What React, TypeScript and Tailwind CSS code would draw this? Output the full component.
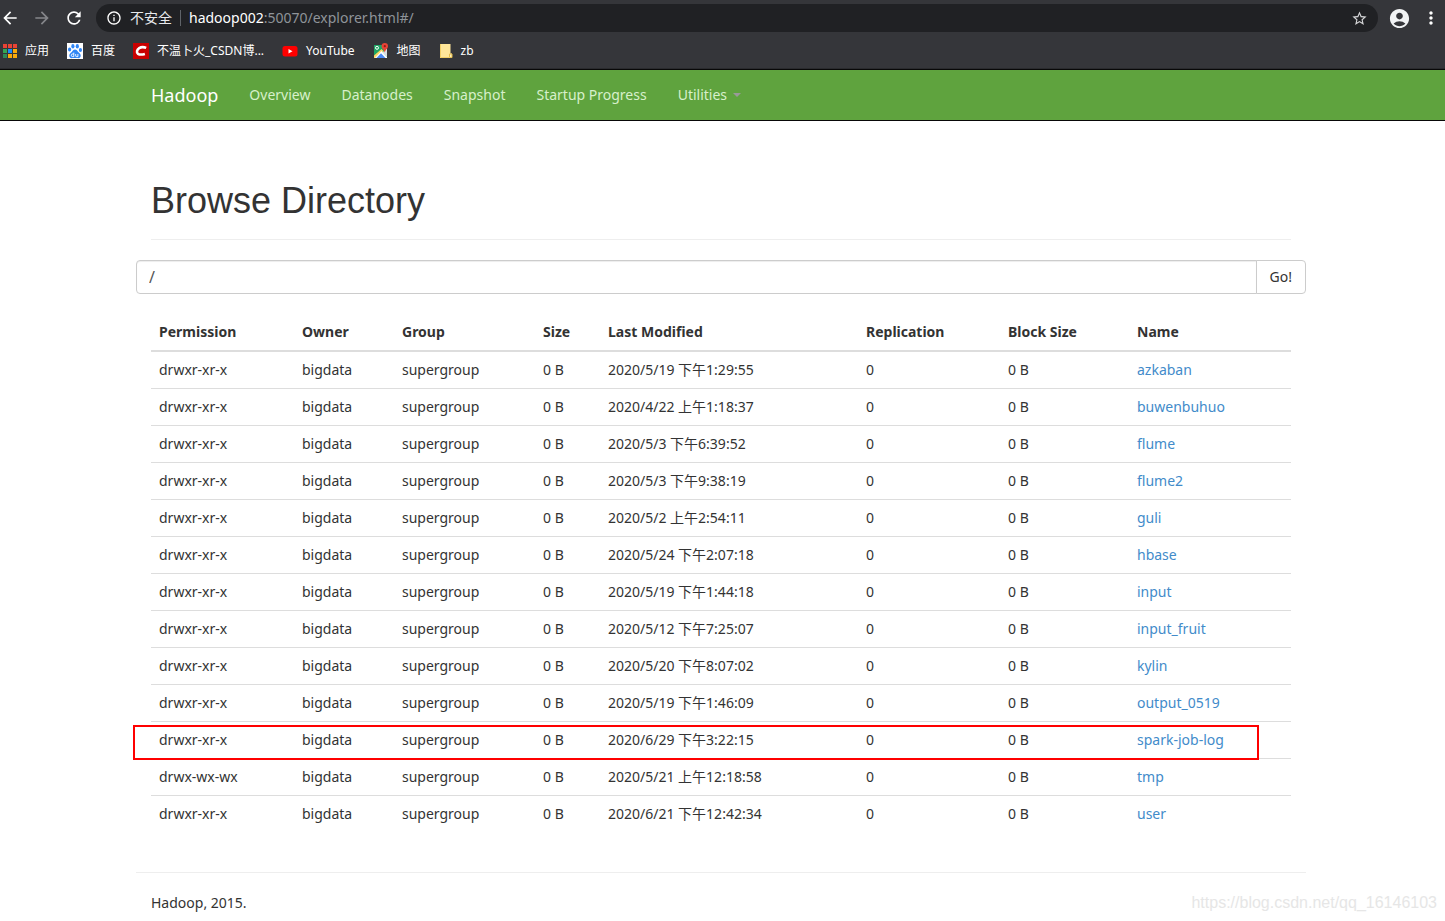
import type { ReactNode } from "react";
import { MdAccountCircle, MdArrowBack, MdArrowForward, MdInfoOutline, MdMoreVert, MdRefresh, MdStarBorder } from "react-icons/md";

const AppsIcon = () => (
  <svg width="14" height="14" viewBox="0 0 14 14" aria-hidden="true" shapeRendering="crispEdges">
    <path fill="#ea4335" d="M0 0h4v4H0zM5 0h4v4H5zM10 0h4v4h-4z" />
    <path fill="#34a853" d="M0 5h4v4H0z" />
    <path fill="#1a8cff" d="M5 5h4v4H5z" />
    <path fill="#fbab0b" d="M10 5h4v4h-4zM5 10h4v4H5zM10 10h4v4h-4z" />
    <path fill="#2e8b57" d="M0 10h4v4H0z" />
  </svg>
);

const BaiduIcon = () => (
  <svg width="16" height="16" viewBox="0 0 16 16" aria-hidden="true">
    <path fill="#fff" d="M0 0h16v16H0z" />
    <g fill="#2f86f6">
      <ellipse cx="5.9" cy="3.2" rx="1.6" ry="2.2" />
      <ellipse cx="10.3" cy="3.3" rx="1.6" ry="2.2" />
      <ellipse cx="2.6" cy="6.6" rx="1.6" ry="2" />
      <ellipse cx="13.4" cy="7" rx="1.6" ry="2" />
      <path d="M8 6.6c-1.700 0-2.200 1.400-3.200 2.400-1.200 1-2.800 2-2.500 4 .3 1.800 1.700 2.300 3.200 2.100 1.700-.3 3.300-.3 5 0 1.500.2 2.900-.3 3.200-2.100.3-2-1.300-3-2.500-4C10.200 8 9.700 6.600 8 6.600z" />
    </g>
    <path d="M6.800 9.600v4H5.600a1.300 1.300 0 0 1 0-2.600h1.200M8.700 11v1.900q0 .7.700.7h1.500V11" fill="none" stroke="#fff" strokeWidth=".9" />
  </svg>
);

const CsdnIcon = () => (
  <svg width="16" height="16" viewBox="0 0 16 16" aria-hidden="true">
    <path fill="#c90000" d="M0 0h16v16H0z" />
    <path d="M13.200 4.900c-2-.8-5-1-7 .2-2.400 1.500-3 4.500-1.200 5.700 1.700 1 4.800.7 6.900.1" fill="none" stroke="#fff" strokeWidth="2.600" />
  </svg>
);

const YouTubeIcon = () => (
  <svg width="16" height="16" viewBox="0 0 16 16" aria-hidden="true">
    <rect x="0.500" y="3" width="15" height="10.500" rx="2.500" fill="#f00" />
    <path fill="#fff" d="M6.500 6v4.500l4-2.250z" />
  </svg>
);

const MapsIcon = () => (
  <svg width="16" height="16" viewBox="0 0 16 16" aria-hidden="true">
    <path fill="#1fa463" d="M1 2h13v13H1z" />
    <path fill="#d8dde3" d="M9.500 9.500 14 5v9z" />
    <path fill="#fdd663" d="M1 12.500 8.500 6l2 2L3.500 15H1z" />
    <path fill="#fff" d="M2 15 8.500 8l5.500 6v1z" />
    <path fill="#4a89f3" d="M3.500 15 8 10.200l4.500 4.800z" />
    <circle cx="4" cy="4.800" r="1.500" fill="none" stroke="#fff" />
    <path fill="#e94335" d="M11.800 0a3.200 3.200 0 0 0-3.200 3.200c0 2.300 2.500 3 3.200 6.300.7-3.300 3.200-4 3.200-6.300A3.200 3.200 0 0 0 11.800 0z" />
    <circle cx="11.800" cy="3.200" r="1.100" fill="#8c1d18" />
  </svg>
);

const FolderIcon = () => (
  <svg width="14" height="14" viewBox="0 0 14 14" aria-hidden="true">
    <path fill="#ffe69a" d="M1 0h10.500v9.500H13V14H1z" />
    <path d="M10.500 13.500V10H13v3.500z" fill="#fff0b8" stroke="#e3bb4c" />
    <path d="M1.500 0v13.500H11" fill="none" stroke="#f2cf66" />
  </svg>
);

const bookmarks: { label: string; icon: ReactNode }[] = [
  { label: "应用", icon: <AppsIcon /> },
  { label: "百度", icon: <BaiduIcon /> },
  { label: "不温卜火_CSDN博...", icon: <CsdnIcon /> },
  { label: "YouTube", icon: <YouTubeIcon /> },
  { label: "地图", icon: <MapsIcon /> },
  { label: "zb", icon: <FolderIcon /> },
];

const navItems = ["Overview", "Datanodes", "Snapshot", "Startup Progress"];

const columns = [
  { title: "Permission", width: "w-[143px]" },
  { title: "Owner", width: "w-[100px]" },
  { title: "Group", width: "w-[141px]" },
  { title: "Size", width: "w-[65px]" },
  { title: "Last Modified", width: "w-[258px]" },
  { title: "Replication", width: "w-[142px]" },
  { title: "Block Size", width: "w-[129px]" },
  { title: "Name", width: "w-[162px]" },
];

const files = [
  { name: "azkaban", modified: "2020/5/19 下午1:29:55" },
  { name: "buwenbuhuo", modified: "2020/4/22 上午1:18:37" },
  { name: "flume", modified: "2020/5/3 下午6:39:52" },
  { name: "flume2", modified: "2020/5/3 下午9:38:19" },
  { name: "guli", modified: "2020/5/2 上午2:54:11" },
  { name: "hbase", modified: "2020/5/24 下午2:07:18" },
  { name: "input", modified: "2020/5/19 下午1:44:18" },
  { name: "input_fruit", modified: "2020/5/12 下午7:25:07" },
  { name: "kylin", modified: "2020/5/20 下午8:07:02" },
  { name: "output_0519", modified: "2020/5/19 下午1:46:09" },
  { name: "spark-job-log", modified: "2020/6/29 下午3:22:15", marked: true },
  { name: "tmp", modified: "2020/5/21 上午12:18:58", permission: "drwx-wx-wx" },
  { name: "user", modified: "2020/6/21 下午12:42:34" },
];

function BrowserBar() {
  return (
    <header className="bg-[#35363a] text-white border-b border-[#2a2b2e]">
      <div className="flex items-center pt-1 pr-1">
        <div className="flex items-center gap-3 pr-3">
          <button aria-label="Back"><MdArrowBack size={20} /></button>
          <button aria-label="Forward" className="text-[#85868a]"><MdArrowForward size={20} /></button>
          <button aria-label="Reload"><MdRefresh size={20} /></button>
        </div>
        <div className="flex h-7 flex-1 items-center rounded-full bg-[#202124] px-2.5 text-sm">
          <MdInfoOutline size={16} className="shrink-0" />
          <span className="ml-2 text-[#e8eaed]">不安全</span>
          <span className="mx-2 h-4 w-px bg-[#5f6368]" />
          <label htmlFor="address">hadoop002</label>
          <input id="address" className="min-w-0 flex-1 bg-transparent text-[#8f9499] outline-none" defaultValue=":50070/explorer.html#/" />
          <button aria-label="Bookmark this page" className="text-[#d5d6d8]"><MdStarBorder size={17} /></button>
        </div>
        <button aria-label="Profile" className="ml-2.5 text-[#f1f3f4]"><MdAccountCircle size={23} /></button>
        <button aria-label="Menu" className="ml-2.5"><MdMoreVert size={20} /></button>
      </div>
      <nav className="flex h-9 items-center gap-[18px] pt-0.5 pl-[3px] text-xs">
        {bookmarks.map((b) => (
          <a key={b.label} href="#" className="flex items-center gap-2">
            {b.icon}
            {b.label}
          </a>
        ))}
      </nav>
    </header>
  );
}

function Navbar() {
  return (
    <nav className="border-y border-[#080808] bg-[#5fa33e] pr-[3px]">
      <div className="mx-auto flex h-[50px] max-w-[1170px] items-center gap-[31px] px-[15px] text-[#d7f0cb]">
        <a href="#" className="text-lg text-white">Hadoop</a>
        {navItems.map((item) => (
          <a key={item} href="#">{item}</a>
        ))}
        <button className="flex items-center gap-1.5">
          Utilities
          <span className="border-x-4 border-t-4 border-x-transparent border-t-[#999]" />
        </button>
      </div>
    </nav>
  );
}

function FileTable() {
  return (
    <table className="w-full table-fixed border-separate border-spacing-0 text-left">
      <thead>
        <tr>
          {columns.map((c) => (
            <th key={c.title} className={`${c.width} border-b-2 border-[#ddd] p-2 font-bold`}>{c.title}</th>
          ))}
        </tr>
      </thead>
      <tbody className="[&>tr:not(:last-child)>td]:border-b [&>tr>td]:border-[#ddd] [&>tr>td]:p-2">
        {files.map((f) => (
          <tr key={f.name} className="relative">
            <td>
              {f.permission ?? "drwxr-xr-x"}
              {f.marked && <span className="absolute -bottom-px -left-[18px] right-8 top-[3px] border-2 border-[#f00] pointer-events-none" />}
            </td>
            <td>bigdata</td>
            <td>supergroup</td>
            <td>0 B</td>
            <td>{f.modified}</td>
            <td>0</td>
            <td>0 B</td>
            <td><a href="#" className="text-[#428bca]">{f.name}</a></td>
          </tr>
        ))}
      </tbody>
    </table>
  );
}

export default function App() {
  return (
    <div className="relative min-h-screen bg-white font-['Noto_Sans','Noto_Sans_CJK_SC',sans-serif] text-sm leading-5 text-[#333]">
      <BrowserBar />
      <Navbar />
      <div className="pr-[3px]">
        <main className="mx-auto max-w-[1170px]">
          <div className="mx-[15px] mb-5 border-b border-[#eee] pt-[60px] pb-[18px]">
            <h1 className="font-['Liberation_Sans',sans-serif] text-4xl leading-10 font-medium">Browse Directory</h1>
          </div>
          <form className="flex h-[34px]" onSubmit={(e) => e.preventDefault()}>
            <input
              aria-label="Directory"
              defaultValue="/"
              className="min-w-0 flex-1 rounded-l border border-[#ccc] px-3 text-base text-[#555] shadow-[inset_0_1px_1px_rgba(0,0,0,0.075)] outline-none"
            />
            <button className="-ml-px rounded-r border border-[#ccc] bg-white px-[13px]">Go!</button>
          </form>
          <div className="mt-5 px-[15px]">
            <FileTable />
          </div>
          <footer className="mt-10 border-t border-[#eee] px-[15px] pt-5">
            <p>Hadoop, 2015.</p>
          </footer>
        </main>
      </div>
      <span className="absolute right-2 bottom-1.5 font-['Liberation_Sans',sans-serif] text-base text-[#e6e6e6]">
        https://blog.csdn.net/qq_16146103
      </span>
    </div>
  );
}
